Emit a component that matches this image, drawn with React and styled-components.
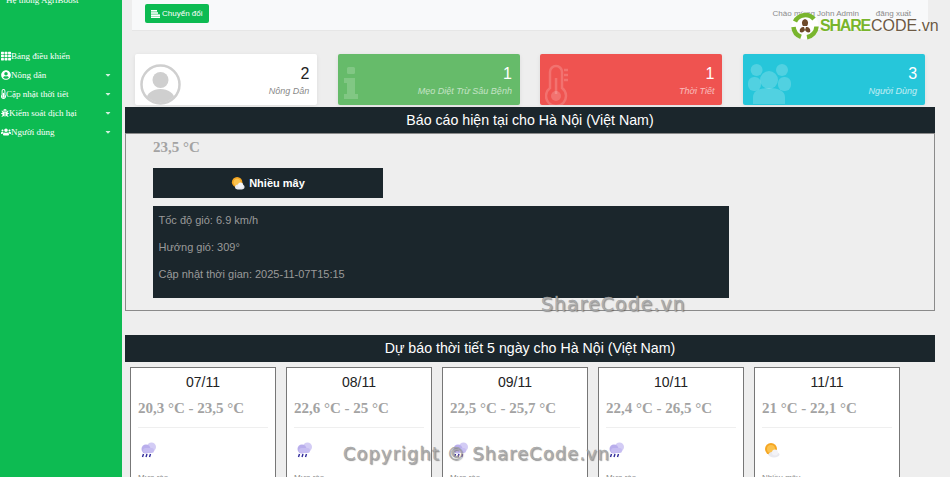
import React from "react";
import styled, { createGlobalStyle } from "styled-components";
import {
  FaTh,
  FaUserCircle,
  FaThermometerHalf,
  FaBug,
  FaUsers,
  FaCaretDown,
} from "react-icons/fa";

const GlobalStyle = createGlobalStyle`
  html, body {
    margin: 0;
    padding: 0;
    height: 477px;
    overflow: hidden;
    background: #eeeeee;
    font-family: "Liberation Sans", Arial, sans-serif;
  }
`;

const Page = styled.div`
  position: relative;
  display: flex;
  width: 950px;
  height: 477px;
  overflow: hidden;
`;

const Sidebar = styled.aside`
  flex: 0 0 122px;
  background: #0dbb52;
  color: #fff;
  font-family: "Liberation Serif", serif;
  font-size: 9px;
`;

const Brand = styled.div`
  height: 51px;
  margin-top: -5px;
  padding-left: 6px;
  font-size: 9px;
  line-height: 10px;
`;

const NavList = styled.div`
  display: flex;
  flex-direction: column;
`;

const NavItem = styled.div`
  display: flex;
  align-items: center;
  height: 19px;
  padding: 0 10px 0 1px;
  white-space: nowrap;
`;

const NavIcon = styled.span`
  flex: none;
  display: flex;
  width: ${(p) => p.$w}px;

  svg {
    width: 100%;
    height: 10px;
  }
`;

const NavLabel = styled.span`
  flex: 1;
`;

const Caret = styled(FaCaretDown)`
  opacity: 0.8;
  font-size: 8px;
`;

const Main = styled.main`
  flex: 1;
  min-width: 0;
  display: flex;
  flex-direction: column;
  padding-left: 3px;
`;

const TopBar = styled.div`
  display: flex;
  align-items: flex-start;
  justify-content: space-between;
  width: 796px;
  height: 31px;
  margin-left: 7px;
  padding: 4px 17px 0 13px;
  box-sizing: border-box;
  background: #f8f9fa;
  border-bottom: 1px solid #e6e6e6;
  flex: none;
`;

const SwitchButton = styled.button`
  display: flex;
  align-items: center;
  gap: 2px;
  width: 64px;
  height: 19px;
  padding: 0 0 0 6px;
  border: 0;
  border-radius: 2px;
  background: #0dbb52;
  color: #fff;
  font-family: "Liberation Sans", sans-serif;
  font-size: 8px;
`;

const UserArea = styled.div`
  display: flex;
  gap: 17px;
  padding-top: 5px;
  font-size: 8px;
  line-height: 10px;
  color: #8a8a8a;
`;

const StatRow = styled.div`
  display: grid;
  grid-template-columns: repeat(4, 182.3px);
  column-gap: 20.3px;
  margin: 23px 0 0 10px;
  flex: none;
`;

const StatCard = styled.div`
  position: relative;
  height: 51px;
  overflow: hidden;
  border-radius: 2px;
  box-sizing: border-box;
  padding: 11px 8px 0 0;
  text-align: right;
  background: ${(p) => p.$bg};
  color: ${(p) => p.$color};
  box-shadow: 0 1px 4px rgba(0, 0, 0, 0.08);
`;

const StatIcon = styled.div`
  position: absolute;
  left: ${(p) => p.$left}px;
  top: ${(p) => p.$top}px;
  color: ${(p) => p.$color};
  line-height: 0;
`;

const StatValue = styled.div`
  font-size: 16px;
  line-height: 18px;
`;

const StatLabel = styled.div`
  font-size: 9px;
  line-height: 12px;
  margin-top: 2px;
  font-style: italic;
  opacity: ${(p) => p.$dim};
`;

const SectionHeader = styled.div`
  flex: none;
  width: 810px;
  height: ${(p) => p.$h}px;
  margin-top: ${(p) => p.$mt}px;
  line-height: ${(p) => p.$h}px;
  background: #1b262c;
  color: #fff;
  font-size: 14.2px;
  text-align: center;
`;

const CurrentBox = styled.section`
  flex: none;
  width: 810px;
  height: 178px;
  box-sizing: border-box;
  border: 1px solid #8a8a8a;
  padding: 0 0 0 27px;
`;

const Temp = styled.div`
  font-family: "Liberation Serif", serif;
  font-weight: bold;
  font-size: ${(p) => p.$size}px;
  line-height: 18px;
  color: #a3a3a3;
  white-space: nowrap;
`;

const CurrentTemp = styled(Temp)`
  margin-top: 4px;
`;

const Condition = styled.div`
  display: flex;
  align-items: center;
  justify-content: center;
  gap: 4px;
  width: 230px;
  height: 30px;
  margin-top: 12px;
  background: #1b262c;
  color: #fff;
  font-size: 11px;
  font-weight: bold;
`;

const Details = styled.div`
  width: 576px;
  height: 92px;
  margin-top: 8px;
  padding: 8px 0 0 5.5px;
  box-sizing: border-box;
  background: #1b262c;
  color: #9a9a9a;
  font-size: 11px;
`;

const DetailLine = styled.p`
  margin: 0 0 14px;
  line-height: 13px;
`;

const ForecastRow = styled.div`
  display: flex;
  gap: 10px;
  margin: 5px 0 0 5px;
`;

const ForecastCard = styled.div`
  flex: 0 0 146px;
  height: 130px;
  box-sizing: border-box;
  border: 1px solid #777;
  background: #fff;
  padding: 0 7px;
`;

const ForecastDate = styled.div`
  margin-top: 6px;
  font-size: 14px;
  line-height: 16px;
  color: #222;
  text-align: center;
`;

const ForecastTemp = styled(Temp)`
  margin-top: 9px;
`;

const Rule = styled.hr`
  margin: 10px 0 0;
  border: 0;
  border-top: 1px solid #efefef;
`;

const WeatherSlot = styled.div`
  height: 45px;
  padding: 14px 0 0 2px;
  box-sizing: border-box;
  line-height: 0;
`;

const Caption = styled.div`
  font-size: 8px;
  line-height: 10px;
  color: #888;
`;

const LogoMark = styled.div`
  position: absolute;
  left: 791px;
  top: 12px;
  display: flex;
  align-items: center;
`;

const LogoText = styled.span`
  font-size: 16px;
  line-height: 28px;
  color: #6d5a45;
  text-shadow: 0 0 2px #fff;

  b {
    color: #79b52d;
    font-weight: bold;
    letter-spacing: -1.2px;
    margin-right: 1px;
  }
`;

const Watermark = styled.div`
  position: absolute;
  left: ${(p) => p.$left}px;
  top: ${(p) => p.$top}px;
  font-family: "DejaVu Sans", sans-serif;
  font-size: ${(p) => p.$size}px;
  letter-spacing: ${(p) => p.$spacing}px;
  -webkit-text-stroke: 0.4px rgba(150, 150, 150, 0.9);
  line-height: 22px;
  white-space: nowrap;
  color: rgba(175, 175, 175, 0.9);
  text-shadow: 1px 1px 1px rgba(70, 70, 70, 0.55);
`;

const SunCloud = ({ size = 14 }) => (
  <svg width={size} height={size} viewBox="0 0 16 16">
    <circle cx="7" cy="7" r="6" fill="#f5a623" />
    <circle cx="7" cy="7" r="4" fill="#fbc24e" />
    <ellipse cx="10" cy="12.5" rx="5.5" ry="3" fill="#e9e9ef" />
    <circle cx="11" cy="10.5" r="3" fill="#f3f3f7" />
  </svg>
);

const RainCloud = () => (
  <svg width="17" height="16" viewBox="0 0 17 16">
    <circle cx="11.5" cy="5" r="4.5" fill="#d3ccf5" />
    <circle cx="6" cy="7" r="4.5" fill="#b9aeec" />
    <rect x="3" y="6" width="11" height="5" rx="2.5" fill="#c6bdf1" />
    <path d="M3.5 12 2.5 15M7 12l-1 3M10.5 12l-1 3" stroke="#2f2a9a" strokeWidth="1.4" fill="none" />
  </svg>
);

const SwitchIcon = () => (
  <svg width="9" height="8" viewBox="0 0 9 8" fill="currentColor">
    <rect x="0" y="0" width="6" height="1.6" />
    <rect x="0" y="2.2" width="7" height="1.6" />
    <rect x="0" y="4.4" width="9" height="1.6" />
    <rect x="0" y="6.4" width="9" height="1.6" />
  </svg>
);

const InfoIcon = () => (
  <svg width="14" height="32" viewBox="0 0 14 32" fill="currentColor">
    <rect x="3" y="0" width="8" height="7" rx="1.5" />
    <path d="M0 11h11v16h3v5H0v-5h3V16H0z" />
  </svg>
);

const PeopleIcon = () => (
  <svg width="43" height="41" viewBox="0 0 43 41" fill="currentColor">
    <circle cx="8.6" cy="7" r="6" />
    <circle cx="34" cy="7" r="6" />
    <rect x="0" y="14" width="13" height="14" rx="6" />
    <rect x="30" y="14" width="13" height="14" rx="6" />
    <circle cx="21" cy="17" r="9" />
    <path d="M5 41V34c0-6 7-9 16-9s16 3 16 9v7z" />
  </svg>
);

const AvatarIcon = () => (
  <svg width="41" height="41" viewBox="0 0 41 41">
    <defs>
      <clipPath id="avatarClip">
        <circle cx="20.5" cy="20.5" r="18" />
      </clipPath>
    </defs>
    <circle cx="20.5" cy="20.5" r="19" fill="#fff" stroke="#cfcfcf" strokeWidth="2.5" />
    <g clipPath="url(#avatarClip)" fill="#cfcfcf">
      <circle cx="20.5" cy="16" r="8" />
      <ellipse cx="20.5" cy="35" rx="14" ry="10" />
    </g>
  </svg>
);

const ThermoIcon = () => (
  <svg width="24" height="42" viewBox="0 0 24 42" fill="none" stroke="currentColor">
    <path d="M5 24V8a6 6 0 0 1 12 0v16a10 10 0 1 1-12 0z" strokeWidth="2.5" />
    <circle cx="11" cy="32" r="5" fill="currentColor" stroke="none" />
    <rect x="9.8" y="14" width="2.5" height="16" fill="currentColor" stroke="none" />
    <path d="M19 6h4M19 11h4M19 16h4" strokeWidth="2.5" />
  </svg>
);

const LogoIcon = () => (
  <svg width="29" height="28" viewBox="0 0 29 28">
    <circle cx="14" cy="14" r="13.5" fill="#fff" opacity="0.85" />
    <g fill="none" stroke="#79b52d" strokeWidth="4.5">
      <path d="M4 9.5A11.5 11.5 0 0 1 23 7" />
      <path d="M25.5 14.5A11.5 11.5 0 0 1 16 25.3" />
      <path d="M10 24.8A11.5 11.5 0 0 1 2.5 15" />
    </g>
    <g fill="#6d4a2a">
      <path d="M14 7c3 1 4 4 2 7h-4c-2-3-1-6 2-7z" />
      <path d="M9 20c-1-3 1-5 4-5l1 3c-1 2-3 3-5 2z" />
      <path d="M19 20c-2 1-4 0-5-2l1-3c3 0 5 2 4 5z" />
    </g>
  </svg>
);

const navItems = [
  { icon: <FaTh />, width: 10, label: "Bảng điều khiển" },
  { icon: <FaUserCircle />, width: 10, label: "Nông dân", caret: true },
  { icon: <FaThermometerHalf />, width: 5, label: "Cập nhật thời tiết", caret: true },
  { icon: <FaBug />, width: 8, label: "Kiểm soát dịch hại", caret: true },
  { icon: <FaUsers />, width: 10, label: "Người dùng", caret: true },
];

const forecast = [
  { date: "07/11", temp: "20,3 °C - 23,5 °C", text: "Mưa rào", rain: true },
  { date: "08/11", temp: "22,6 °C - 25 °C", text: "Mưa rào", rain: true },
  { date: "09/11", temp: "22,5 °C - 25,7 °C", text: "Mưa rào", rain: true },
  { date: "10/11", temp: "22,4 °C - 26,5 °C", text: "Mưa rào", rain: true },
  { date: "11/11", temp: "21 °C - 22,1 °C", text: "Nhiều mây", rain: false },
];

const App = () => (
  <Page>
    <GlobalStyle />
    <Sidebar>
      <Brand>Hệ thống AgriBoost</Brand>
      <NavList>
        {navItems.map((item) => (
          <NavItem key={item.label}>
            <NavIcon $w={item.width}>{item.icon}</NavIcon>
            <NavLabel>{item.label}</NavLabel>
            {item.caret && <Caret />}
          </NavItem>
        ))}
      </NavList>
    </Sidebar>
    <Main>
      <TopBar>
        <SwitchButton>
          <SwitchIcon />
          Chuyển đổi
        </SwitchButton>
        <UserArea>
          <span>Chào mừng John Admin</span>
          <span>đăng xuất</span>
        </UserArea>
      </TopBar>
      <StatRow>
        <StatCard $bg="#fff" $color="#222">
          <StatIcon $left={5} $top={10}>
            <AvatarIcon />
          </StatIcon>
          <StatValue>2</StatValue>
          <StatLabel $dim={0.55}>Nông Dân</StatLabel>
        </StatCard>
        <StatCard $bg="#66bb6a" $color="#fff">
          <StatIcon $left={6} $top={13} $color="rgba(255,255,255,0.18)">
            <InfoIcon />
          </StatIcon>
          <StatValue>1</StatValue>
          <StatLabel $dim={0.6}>Mẹo Diệt Trừ Sâu Bệnh</StatLabel>
        </StatCard>
        <StatCard $bg="#ef5350" $color="#fff">
          <StatIcon $left={5} $top={10} $color="rgba(255,255,255,0.18)">
            <ThermoIcon />
          </StatIcon>
          <StatValue>1</StatValue>
          <StatLabel $dim={0.6}>Thời Tiết</StatLabel>
        </StatCard>
        <StatCard $bg="#26c6da" $color="#fff">
          <StatIcon $left={5} $top={9} $color="rgba(255,255,255,0.2)">
            <PeopleIcon />
          </StatIcon>
          <StatValue>3</StatValue>
          <StatLabel $dim={0.7}>Người Dùng</StatLabel>
        </StatCard>
      </StatRow>
      <SectionHeader $h={26} $mt={2}>
        Báo cáo hiện tại cho Hà Nội (Việt Nam)
      </SectionHeader>
      <CurrentBox>
        <CurrentTemp $size={15}>23,5 °C</CurrentTemp>
        <Condition>
          <SunCloud />
          Nhiều mây
        </Condition>
        <Details>
          <DetailLine>Tốc độ gió: 6.9 km/h</DetailLine>
          <DetailLine>Hướng gió: 309°</DetailLine>
          <DetailLine>Cập nhật thời gian: 2025-11-07T15:15</DetailLine>
        </Details>
      </CurrentBox>
      <SectionHeader $h={27} $mt={24}>
        Dự báo thời tiết 5 ngày cho Hà Nội (Việt Nam)
      </SectionHeader>
      <ForecastRow>
        {forecast.map((day) => (
          <ForecastCard key={day.date}>
            <ForecastDate>{day.date}</ForecastDate>
            <ForecastTemp $size={15}>{day.temp}</ForecastTemp>
            <Rule />
            <WeatherSlot>{day.rain ? <RainCloud /> : <SunCloud size={16} />}</WeatherSlot>
            <Caption>{day.text}</Caption>
          </ForecastCard>
        ))}
      </ForecastRow>
    </Main>
    <LogoMark>
      <LogoIcon />
      <LogoText>
        <b>SHARE</b>CODE.vn
      </LogoText>
    </LogoMark>
    <Watermark $left={541} $top={293} $size={19} $spacing={1}>
      ShareCode.vn
    </Watermark>
    <Watermark $left={343} $top={443} $size={18} $spacing={1}>
      Copyright © ShareCode.vn
    </Watermark>
  </Page>
);

export default App;
